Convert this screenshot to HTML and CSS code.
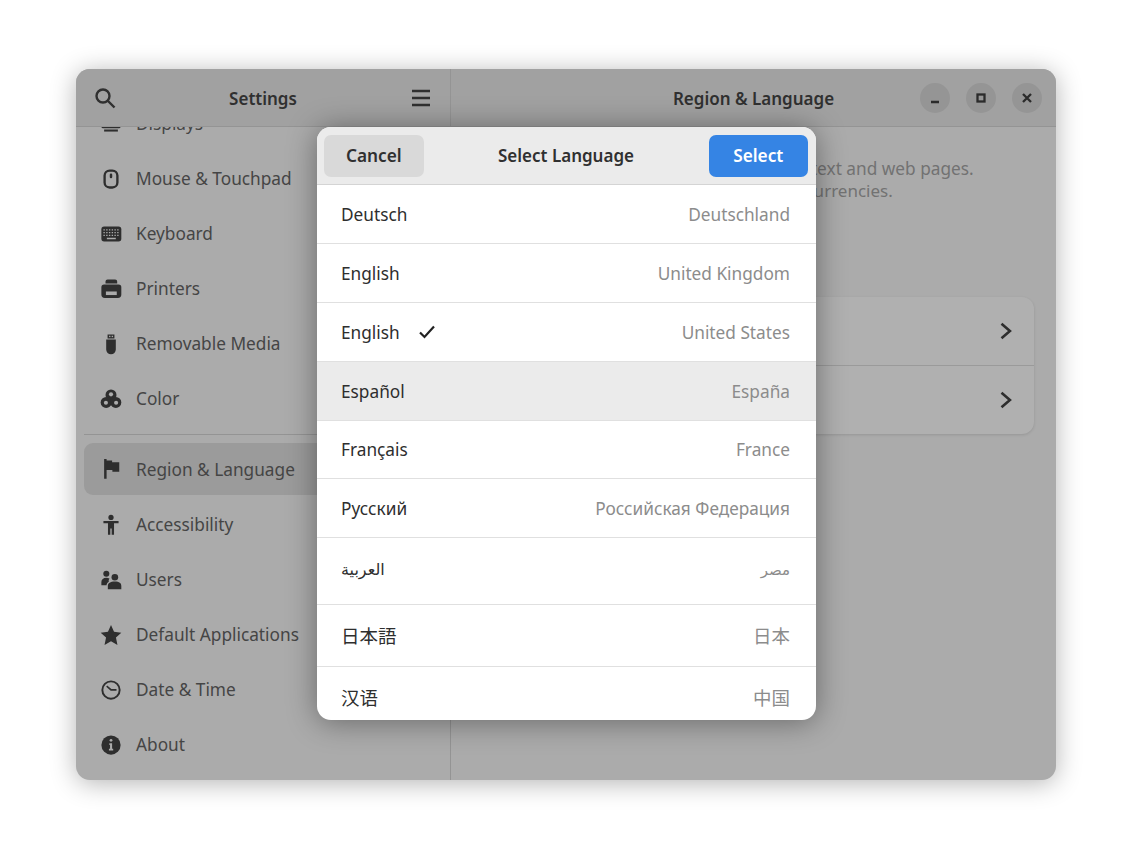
FILE: index.html
```html
<!DOCTYPE html>
<html>
<head>
    <title>Settings - Region &amp; Language</title>
    <link rel="stylesheet" href="styles.css">
</head>
<body>
    <div class="window">
        <div class="titlebar">
            <div class="titlebar-left">
                <svg class="head-icon" viewBox="0 0 22 22"><circle cx="9" cy="9" r="6.500"/><path d="M14 14l6.500 6.500"/></svg>
                <span class="title">Settings</span>
                <svg class="head-icon" viewBox="0 0 22 22"><path d="M2 4h18M2 11h18M2 18h18"/></svg>
            </div>
            <div class="titlebar-right">
                <span class="title title-main">Region &amp; Language</span>
                <div class="win-buttons">
                    <span class="win-btn"><svg viewBox="0 0 12 12"><path d="M2 10h8"/></svg></span>
                    <span class="win-btn"><svg viewBox="0 0 12 12"><rect x="2.500" y="2.500" width="7" height="7"/></svg></span>
                    <span class="win-btn"><svg viewBox="0 0 12 12"><path d="M2 2l8 8M10 2l-8 8"/></svg></span>
                </div>
            </div>
        </div>

        <div class="main">
            <div class="sidebar">
                <div class="side-list">
                    <div class="side-row">
                        <svg class="side-icon" viewBox="0 0 16 16"><rect x="1" y="2" width="14" height="9" rx="1"/><rect x="3" y="12" width="10" height="1.500"/></svg>
                        Displays
                    </div>
                    <div class="side-row">
                        <svg class="side-icon" viewBox="0 0 16 16"><path fill-rule="evenodd" d="M7 1h2a4.500 4.500 0 0 1 4.500 4.500v5A4.500 4.500 0 0 1 9 15H7a4.500 4.500 0 0 1-4.500-4.500v-5A4.500 4.500 0 0 1 7 1zm0 1.700a2.800 2.800 0 0 0-2.800 2.800v5A2.800 2.800 0 0 0 7 13.300h2a2.800 2.800 0 0 0 2.800-2.800v-5A2.800 2.800 0 0 0 9 2.700z"/><rect x="7.100" y="4" width="1.800" height="3.500" rx=".9"/></svg>
                        Mouse &amp; Touchpad
                    </div>
                    <div class="side-row">
                        <svg class="side-icon" viewBox="0 0 16 16"><rect x="1" y="2.500" width="14.500" height="11" rx="2"/><path class="cut" stroke-dasharray="1 1" d="M2.500 5h11.500M2.500 7h11.500M2.500 9h11.500"/><path class="cut" d="M5 11.300h6.500"/></svg>
                        Keyboard
                    </div>
                    <div class="side-row">
                        <svg class="side-icon" viewBox="0 0 16 16"><path d="M4 2.500a1.500 1.500 0 0 1 1.500-1.500h5.500A1.500 1.500 0 0 1 12.500 2.500V4H4zM3 4.800h10.500A2 2 0 0 1 15.500 6.800V12a2.500 2.500 0 0 1-2.500 2.500H3.500A2.500 2.500 0 0 1 1 12V6.800a2 2 0 0 1 2-2z"/><rect class="hole" x="4.300" y="9.800" width="7.900" height="2.600"/></svg>
                        Printers
                    </div>
                    <div class="side-row">
                        <svg class="side-icon" viewBox="0 0 16 16"><path d="M5.500 1h5v3h-5zM4.500 4.800h7v7.200a3.500 3.500 0 0 1-7 0z"/><rect class="hole" x="6.600" y="2" width="1" height="1"/><rect class="hole" x="8.500" y="2" width="1" height="1"/></svg>
                        Removable Media
                    </div>
                    <div class="side-row">
                        <svg class="side-icon" viewBox="0 0 16 16"><circle cx="8" cy="5" r="4"/><circle cx="4.500" cy="10.500" r="4"/><circle cx="11.500" cy="10.500" r="4"/><circle class="hole" cx="8" cy="4.600" r="1.500"/><circle class="hole" cx="4.300" cy="10.700" r="1.500"/><circle class="hole" cx="11.700" cy="10.700" r="1.500"/></svg>
                        Color
                    </div>
                    <div class="side-sep"></div>
                    <div class="side-row side-row-active">
                        <svg class="side-icon" viewBox="0 0 16 16"><path d="M3 .8h1.800v1h4v1.200H14v7H9V8.800H4.800V15H3z"/></svg>
                        Region &amp; Language
                    </div>
                    <div class="side-row">
                        <svg class="side-icon" viewBox="0 0 16 16"><circle cx="8" cy="2.500" r="1.900"/><path d="M2.500 5h11v1.700H10.200V15H8.500v-4.500h-1V15H5.800V6.700H2.500z"/></svg>
                        Accessibility
                    </div>
                    <div class="side-row">
                        <svg class="side-icon" viewBox="0 0 16 16"><circle cx="4.600" cy="3.400" r="2.200"/><circle cx="10.800" cy="6" r="2.400"/><path d="M1 11.800V9.500c0-2 1.500-3.200 3.600-3.200 1 0 1.800.3 2.400.8-.6.500-.8 1.300-.6 2.100-1 .6-1.600 1.600-1.600 2.600zM5.700 14.800v-2.500c0-2 1.800-3.200 5.100-3.200s4.700 1.200 4.700 3.200v2.500z"/></svg>
                        Users
                    </div>
                    <div class="side-row">
                        <svg class="side-icon" viewBox="0 0 16 16"><path d="M8 .8l2.200 4.900 5.300.6-3.900 3.600 1.100 5.300L8 12.500l-4.700 2.700 1.100-5.300L.5 6.300l5.300-.6z"/></svg>
                        Default Applications
                    </div>
                    <div class="side-row">
                        <svg class="side-icon" viewBox="0 0 16 16"><path fill-rule="evenodd" d="M8 1a7 7 0 1 1 0 14A7 7 0 0 1 8 1zm0 1.400a5.600 5.600 0 1 0 0 11.200A5.600 5.600 0 0 0 8 2.400z"/><path d="M4.500 5.600l.7-.9L8.300 7.300H12v1.300H7.800z"/></svg>
                        Date &amp; Time
                    </div>
                    <div class="side-row">
                        <svg class="side-icon" viewBox="0 0 16 16"><circle cx="8" cy="8" r="7"/><circle class="hole" cx="8" cy="4.600" r="1"/><path class="hole" d="M6.800 6.800h2v4h.8V12H6.500v-1.200h.8V8h-.5z"/></svg>
                        About
                    </div>
                </div>
            </div>

            <div class="content">
                <p class="intro">The language setting is used for interface text and web pages. <span class="intro-second">Formats are used for numbers, dates and currencies.</span></p>
                <div class="card">
                    <div class="card-row">
                        <span>Language</span>
                        <svg class="chevron" viewBox="0 0 12 16"><path d="M2 1.500L9.500 8 2 14.500"/></svg>
                    </div>
                    <div class="card-row">
                        <span>Formats</span>
                        <svg class="chevron" viewBox="0 0 12 16"><path d="M2 1.500L9.500 8 2 14.500"/></svg>
                    </div>
                </div>
            </div>
        </div>

        <div class="dialog">
            <div class="dialog-head">
                <button class="btn btn-cancel">Cancel</button>
                <span class="dialog-title">Select Language</span>
                <button class="btn btn-select">Select</button>
            </div>
            <div class="lang-row"><span class="lang">Deutsch</span><span class="region">Deutschland</span></div>
            <div class="lang-row"><span class="lang">English</span><span class="region">United Kingdom</span></div>
            <div class="lang-row">
                <span class="lang">English</span>
                <svg class="check" viewBox="0 0 18 16"><path d="M2 8.500L6.500 13 16 2.500"/></svg>
                <span class="region">United States</span>
            </div>
            <div class="lang-row lang-row-hover"><span class="lang">Español</span><span class="region">España</span></div>
            <div class="lang-row lang-row-short"><span class="lang">Français</span><span class="region">France</span></div>
            <div class="lang-row"><span class="lang">Русский</span><span class="region">Российская Федерация</span></div>
            <div class="lang-row lang-row-ar"><span class="lang ar" lang="ar">العربية</span><span class="region ar" lang="ar">مصر</span></div>
            <div class="lang-row lang-row-cjk"><span class="lang jp" lang="ja">日本語</span><span class="region jp" lang="ja">日本</span></div>
            <div class="lang-row lang-row-cjk"><span class="lang sc" lang="zh">汉语</span><span class="region sc" lang="zh">中国</span></div>
        </div>
    </div>
</body>
</html>
```

FILE: styles.css
```css
html, body {
    margin: 0;
    height: 864px;
    overflow: hidden;
    background: #fff;
}
body {
    padding: 69px 76px 0;
    font-family: "Noto Sans", sans-serif;
    font-size: 17.25px;
    color: #454545;
    box-sizing: border-box;
}
.window {
    position: relative;
    width: 980px;
    height: 711px;
    border-radius: 14px;
    background: #ababab;
    box-shadow: 0 3px 26px rgba(0, 0, 0, 0.3);
    overflow: hidden;
    display: flex;
    flex-direction: column;
}

/* title bar */
.titlebar {
    display: flex;
    flex: 0 0 58px;
    box-sizing: border-box;
    background: #a1a1a1;
    border-bottom: 1px solid #949494;
}
.titlebar-left {
    flex: 0 0 375px;
    box-sizing: border-box;
    display: flex;
    align-items: center;
    justify-content: space-between;
    padding: 0 18px;
    border-right: 1px solid #949494;
}
.titlebar-right {
    flex: 1;
    position: relative;
    display: flex;
    align-items: center;
    justify-content: flex-end;
    padding-right: 14px;
}
.title {
    padding-top: 2px;
    font-size: 17px;
    font-weight: 600;
    color: #303030;
}
.title-main {
    position: absolute;
    left: 0;
    right: 0;
    text-align: center;
}
.head-icon {
    width: 22px;
    height: 22px;
    fill: none;
    stroke: #303030;
    stroke-width: 2.4;
}
.win-buttons {
    display: flex;
    gap: 16px;
}
.win-btn {
    width: 30px;
    height: 30px;
    border-radius: 50%;
    background: #959595;
    display: flex;
    align-items: center;
    justify-content: center;
}
.win-btn svg {
    width: 12px;
    height: 12px;
    fill: none;
    stroke: #2b2b2b;
    stroke-width: 2.3;
}

/* main area */
.main {
    flex: 1;
    display: flex;
    min-height: 0;
}
.sidebar {
    flex: 0 0 375px;
    box-sizing: border-box;
    border-right: 1px solid #949494;
    overflow: hidden;
    padding: 0 8px;
}
.side-list {
    margin-top: -31px;
}
.side-row {
    height: 55px;
    display: flex;
    align-items: center;
    gap: 14px;
    padding-left: 16px;
}
.side-row-active {
    height: 52px;
    margin-bottom: 2px;
    border-radius: 9px;
    background: #9b9b9b;
}
.side-sep {
    height: 1px;
    margin: 8px 0;
    background: #949494;
}
.side-icon {
    width: 22px;
    height: 22px;
    flex: none;
    fill: #2e2e2e;
}
.side-icon .cut {
    fill: none;
    stroke: #ababab;
    stroke-width: 1;
}
.side-icon .hole {
    fill: #ababab;
}

.content {
    flex: 1;
    min-width: 0;
    padding: 31px 22px 0 19px;
}
.intro {
    margin: 0;
    width: 530px;
    line-height: 22px;
    color: #727272;
}
.intro-second {
    display: block;
    font-size: 17px;
}
.card {
    margin-top: 95px;
    border-radius: 12px;
    background: #b0b0b0;
    box-shadow: 0 1px 3px rgba(0, 0, 0, 0.12);
}
.card-row {
    height: 68px;
    display: flex;
    align-items: center;
    justify-content: space-between;
    padding: 0 21px 0 16px;
}
.card-row + .card-row {
    border-top: 1px solid #9a9a9a;
}
.chevron {
    width: 14px;
    height: 18px;
    fill: none;
    stroke: #2e2e2e;
    stroke-width: 2.3;
}

/* language dialog */
.dialog {
    position: absolute;
    left: 240.5px;
    top: 58px;
    width: 499px;
    height: 593px;
    border-radius: 14px;
    background: #fff;
    overflow: hidden;
    box-shadow: 0 2px 30px rgba(0, 0, 0, 0.4);
    color: #2e2e2e;
}
.dialog-head {
    position: relative;
    height: 57px;
    display: flex;
    align-items: center;
    justify-content: space-between;
    padding: 0 7.5px;
    background: #ebebeb;
    border-bottom: 1px solid #d4d4d4;
}
.dialog-title {
    font-size: 17px;
    font-weight: 600;
    color: #303030;
}
.btn {
    width: 99.5px;
    height: 42px;
    border: none;
    border-radius: 7px;
    font-family: inherit;
    font-size: 17.25px;
    font-weight: 600;
    cursor: pointer;
}
.btn-cancel {
    background: #d9d9d9;
    color: #303030;
}
.btn-select {
    background: #3584e4;
    color: #fff;
}
.lang-row {
    height: 58px;
    display: flex;
    align-items: center;
    padding: 0 25.5px 0 24.5px;
    border-bottom: 1px solid #e0e0e0;
}
.lang-row-hover {
    background: #ebebeb;
}
.lang-row-short {
    height: 57px;
}
.lang-row-ar {
    height: 63px;
    padding-bottom: 3px;
}
.lang-row-cjk {
    height: 59px;
    padding-bottom: 2px;
}
.lang-row:last-child {
    border-bottom: none;
}
.region {
    margin-left: auto;
    color: #8c8c8c;
}
.check {
    width: 18px;
    height: 16px;
    margin-left: 18px;
    fill: none;
    stroke: #222;
    stroke-width: 2.2;
}
.ar {
    font-family: "DejaVu Sans", sans-serif;
    font-size: 16px;
}
.region.ar {
    font-size: 15px;
}
.jp {
    font-family: "Noto Sans CJK JP", sans-serif;
    font-size: 18.5px;
}
.sc {
    font-family: "Noto Sans CJK SC", sans-serif;
    font-size: 18.5px;
}
```
